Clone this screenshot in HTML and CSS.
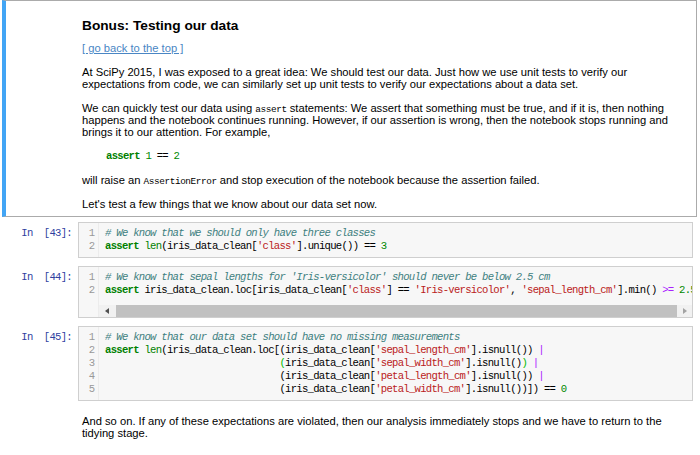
FILE: index.html
```html
<!DOCTYPE html>
<html>
<head>
<meta charset="utf-8">
<link rel="stylesheet" href="styles.css">
</head>
<body>
<div class="notebook">
  <div class="md-cell selected">
    <h3 class="title">Bonus: Testing our data</h3>
    <p><a class="back" href="#">[ go back to the top ]</a></p>
    <p>At SciPy 2015, I was exposed to a great idea: We should test our data. Just how we use unit tests to verify our expectations from code, we can similarly set up unit tests to verify our expectations about a data set.</p>
    <p>We can quickly test our data using <code>assert</code> statements: We assert that something must be true, and if it is, then nothing happens and the notebook continues running. However, if our assertion is wrong, then the notebook stops running and brings it to our attention. For example,</p>
    <pre class="block"><span class="kw">assert</span> <span class="num">1</span> == <span class="num">2</span></pre>
    <p>will raise an <code>AssertionError</code> and stop execution of the notebook because the assertion failed.</p>
    <p>Let's test a few things that we know about our data set now.</p>
  </div>

  <div class="code-cell">
    <div class="prompt">In  [43]:</div>
    <div class="input">
      <div class="gutter">1<br>2</div>
      <div class="editor">
<pre class="code"><span class="cm"># We know that we should only have three classes</span>
<span class="kw">assert</span> <span class="bi">len</span>(iris_data_clean[<span class="str">'class'</span>].unique()) == <span class="num">3</span></pre>
      </div>
    </div>
  </div>

  <div class="code-cell">
    <div class="prompt">In  [44]:</div>
    <div class="input">
      <div class="gutter">1<br>2</div>
      <div class="editor">
<pre class="code"><span class="cm"># We know that sepal lengths for 'Iris-versicolor' should never be below 2.5 cm</span>
<span class="kw">assert</span> iris_data_clean.loc[iris_data_clean[<span class="str">'class'</span>] == <span class="str">'Iris-versicolor'</span>, <span class="str">'sepal_length_cm'</span>].min() <span class="op">&gt;=</span> <span class="num">2.5</span></pre>
        <div class="hscroll">
          <div class="arr arr-l"><span class="tri-l"></span></div>
          <div class="thumb"></div>
          <div class="arr arr-r"><span class="tri-r"></span></div>
        </div>
      </div>
    </div>
  </div>

  <div class="code-cell">
    <div class="prompt">In  [45]:</div>
    <div class="input">
      <div class="gutter">1<br>2<br>3<br>4<br>5</div>
      <div class="editor">
<pre class="code"><span class="cm"># We know that our data set should have no missing measurements</span>
<span class="kw">assert</span> <span class="bi">len</span>(iris_data_clean.loc[(iris_data_clean[<span class="str">'sepal_length_cm'</span>].isnull()) <span class="op">|</span>
                               <span class="match">(</span>iris_data_clean[<span class="str">'sepal_width_cm'</span>].isnull()<span class="match">)</span> <span class="op">|</span>
                               (iris_data_clean[<span class="str">'petal_length_cm'</span>].isnull()) <span class="op">|</span>
                               (iris_data_clean[<span class="str">'petal_width_cm'</span>].isnull())]) == <span class="num">0</span></pre>
      </div>
    </div>
  </div>

  <div class="md-cell plain">
    <p>And so on. If any of these expectations are violated, then our analysis immediately stops and we have to return to the tidying stage.</p>
  </div>
</div>
</body>
</html>
```

FILE: styles.css
```css
* { box-sizing: border-box; }

body {
  margin: 0;
  background: #fff;
  color: #000;
  font-family: "Liberation Sans", Arial, sans-serif;
  font-size: 11.2px;
}

.notebook {
  padding: 0 3px 0 2px;
}

.md-cell {
  padding: 17px 6px 7px 76px;
  line-height: 12px;
}

.md-cell.selected {
  border: 1px solid #ababab;
  border-left: 4px solid #42a5f5;
  height: 217px;
}

.md-cell.plain {
  padding-top: 6px;
  padding-left: 80px;
  padding-right: 10px;
}

.md-cell p {
  margin: 0 0 12px 0;
}

.title {
  margin: 0 0 8px 0;
  font-size: 13.7px;
  line-height: 16px;
  font-weight: bold;
}

.back {
  color: #4a86c4;
  text-decoration: underline;
}

code {
  font-family: "Liberation Mono", monospace;
  font-size: 9.4px;
  letter-spacing: -0.4px;
  line-height: 0;
}

.block {
  margin: 0 0 12px 24px;
  font-family: "Liberation Mono", monospace;
  font-size: 10.6px;
  letter-spacing: -0.73px;
  line-height: 12px;
}

.code-cell {
  display: flex;
  margin: 5px 4px 8px 0;
}

.code-cell + .code-cell {
  margin-top: 0;
}

.prompt {
  width: 76px;
  flex: none;
  padding: 5px 6px 0 0;
  text-align: right;
  white-space: pre;
  color: #303f9f;
  font-family: "Liberation Mono", monospace;
  font-size: 10.6px;
  letter-spacing: -0.73px;
  line-height: 13px;
}

.input {
  flex: 1;
  min-width: 0;
  display: flex;
  border: 1px solid #cfcfcf;
  background: #f7f7f7;
}

.gutter {
  width: 20px;
  flex: none;
  padding: 4px 3px 4px 0;
  text-align: right;
  color: #999;
  border-right: 1px solid #ececec;
  font-family: "Liberation Mono", monospace;
  font-size: 10.6px;
  line-height: 13px;
}

.editor {
  flex: 1;
  min-width: 0;
  overflow: hidden;
}

.code {
  margin: 0;
  padding: 4px 6px;
  white-space: pre;
  overflow: hidden;
  font-family: "Liberation Mono", monospace;
  font-size: 10.6px;
  letter-spacing: -0.73px;
  line-height: 13px;
  color: #000;
}

.cm { color: #408080; font-style: italic; }
.kw { color: #008000; font-weight: bold; }
.bi { color: #008000; }
.str { color: #ba2121; }
.num { color: #080; }
.op { color: #aa22ff; }
.match { color: #0b0; }

.hscroll {
  display: flex;
  height: 12px;
  margin-top: 4px;
  background: #f1f1f1;
}

.arr {
  width: 15px;
  flex: none;
  display: flex;
  align-items: center;
  justify-content: center;
}

.thumb {
  flex: 1;
  margin-left: 2px;
  background: #c1c1c1;
}

.tri-l {
  width: 0;
  height: 0;
  border-top: 3px solid transparent;
  border-bottom: 3px solid transparent;
  border-right: 4px solid #505050;
}

.tri-r {
  width: 0;
  height: 0;
  border-top: 3px solid transparent;
  border-bottom: 3px solid transparent;
  border-left: 4px solid #a3a3a3;
}
```
